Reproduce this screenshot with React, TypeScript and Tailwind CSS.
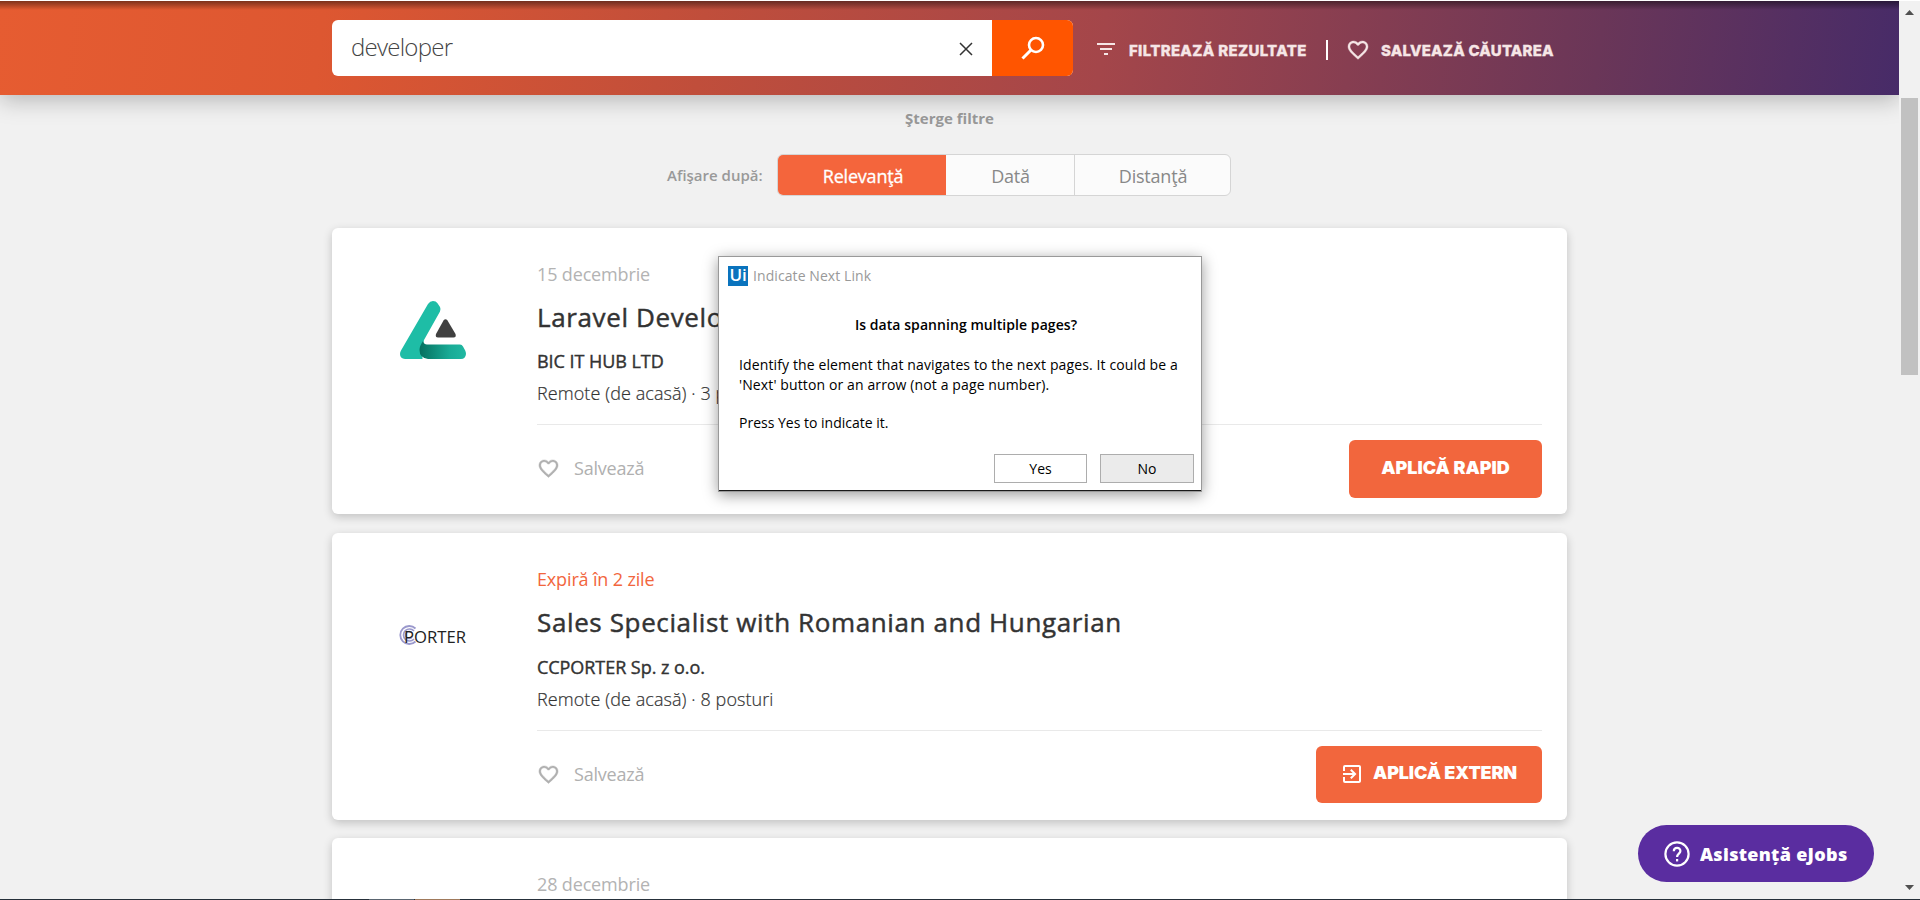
import type { ReactNode } from "react";

type IconProps = { className?: string };

const Heart = ({ className }: IconProps) => (
  <svg viewBox="0 0 24 24" className={className} fill="currentColor" stroke="currentColor" strokeWidth="0.4">
    <path d="M16.5 3c-1.74 0-3.41.81-4.5 2.09C10.91 3.81 9.24 3 7.5 3 4.42 3 2 5.42 2 8.5c0 3.78 3.4 6.86 8.55 11.54L12 21.35l1.45-1.32C18.6 15.36 22 12.28 22 8.5 22 5.42 19.58 3 16.5 3zm-4.4 15.55l-.1.1-.1-.1C7.14 14.24 4 11.39 4 8.5 4 6.5 5.5 5 7.5 5c1.54 0 3.04.99 3.57 2.36h1.87C13.46 5.99 14.96 5 16.5 5c2 0 3.5 1.5 3.5 3.5 0 2.89-3.14 5.74-7.9 10.05z" />
  </svg>
);

const ExitIcon = ({ className }: IconProps) => (
  <svg viewBox="0 0 24 24" className={className} fill="currentColor">
    <path d="M10.09 15.59L11.5 17l5-5-5-5-1.41 1.41L12.67 11H3v2h9.67l-2.58 2.59zM19 3H5a2 2 0 0 0-2 2v4h2V5h14v14H5v-4H3v4a2 2 0 0 0 2 2h14c1.1 0 2-.9 2-2V5c0-1.1-.9-2-2-2z" />
  </svg>
);

const LaravelLogo = () => (
  <svg viewBox="0 0 66 58" className="h-[58px] w-[66px]">
    <defs>
      <linearGradient id="foot" x1="0" x2="1" y1="0" y2="0">
        <stop offset="0" stopColor="#05705f" />
        <stop offset="0.65" stopColor="#19ab96" />
        <stop offset="1" stopColor="#20b8a2" />
      </linearGradient>
    </defs>
    <path d="M28 3Q30 0 33 0Q36 0 37.500 2.300L40 6Q41 8 40 10.500L24 39Q22 45 22.500 58H5Q0 57.500 0 53Q0 51 1 49.500Z" fill="#1ebda6" />
    <path d="M23 40Q24 43.500 27 43.500H60Q62 43.500 63 45.500L65.200 49.500Q66 51 66 53Q65.500 58 61 58H28Q19.500 57 19.500 49Q19.500 45 23 40Z" fill="url(#foot)" />
    <path d="M43.500 19.500Q45.500 17 47.500 19.500L55.500 33Q56.500 36.500 53.500 36.500H38Q35 36.500 36 33Z" fill="#404040" />
  </svg>
);

const PorterLogo = () => (
  <div className="relative flex h-[22px] w-[68px] items-center pl-[5px]">
    <svg viewBox="0 0 20 20" className="absolute left-0 top-0 size-5" fill="none" stroke="#9a98cc">
      <path d="M16.500 3.500A9 9 0 1 0 16.500 16.500" strokeWidth="1.800" />
      <path d="M15 6A6 6 0 1 0 15 14" strokeWidth="1.700" />
      <path d="M13 8A3.500 3.500 0 1 0 13 12" strokeWidth="1.700" />
    </svg>
    <span className="relative pt-px text-[16.7px] leading-[22px] text-[#222]">PORTER</span>
  </div>
);

type JobProps = {
  date: string;
  urgent?: boolean;
  title?: string;
  company?: string;
  place?: string;
  logo?: ReactNode;
  extra?: boolean;
  action?: ReactNode;
};

const Job = ({ date, urgent, title, company, place, logo, extra, action }: JobProps) => (
  <article
    className={`flex w-[1235px] shrink-0 rounded-md bg-white pr-[25px] shadow-[0_3px_10px_rgba(0,0,0,0.2)] ${extra ? "h-[287px]" : "h-[286px]"}`}
  >
    <div className="flex w-[205px] shrink-0 justify-center pr-[3px]">{logo}</div>
    <div className="flex grow flex-col pt-[34px]">
      <p className={`text-[18px] leading-6 tracking-[-0.15px] ${urgent ? "text-[#f2663d]" : "text-[#b3b3b3]"}`}>{date}</p>
      {title && (
        <>
          <h2 className="mt-[13px] text-[26px] leading-9 tracking-[0.62px] text-[#333] [-webkit-text-stroke:0.45px_#333]">{title}</h2>
          <p className={`text-[18px] leading-6 tracking-[-0.05px] text-[#333] [-webkit-text-stroke:0.4px_#333] ${extra ? "mt-[15px]" : "mt-[14px]"}`}>{company}</p>
          <p className="mt-2 text-[18px] font-light leading-6 tracking-[0.08px] text-[#333] [-webkit-text-stroke:0.2px_#333]">{place}</p>
          <div className="mt-[19px] flex items-start justify-between border-t border-[#e9e9e9] pt-[15px]">
            <div className="flex h-[56px] items-center text-[#b0b0b0]">
              <Heart className="h-[23px] w-[23px]" />
              <span className="ml-[14px] text-[18px] leading-6 tracking-[-0.2px]">Salvează</span>
            </div>
            {action}
          </div>
        </>
      )}
    </div>
  </article>
);

const Scrollbar = () => (
  <div className="flex w-[21px] shrink-0 flex-col items-center bg-[#f1f1f1] pb-[9px] pt-[9px]">
    <svg viewBox="0 0 9 5" className="h-[5px] w-[9px]"><path d="M4.500 0 9 5H0Z" fill="#505050" /></svg>
    <div className="mt-[83px] h-[277px] w-[17px] bg-[#c1c1c1]" />
    <svg viewBox="0 0 9 5" className="mt-auto h-[5px] w-[9px]"><path d="M0 0H9L4.500 5Z" fill="#505050" /></svg>
  </div>
);

const Header = () => (
  <header className="relative z-10 flex h-[94px] shrink-0 items-start bg-[linear-gradient(97deg,#e65c31_0%,#dd5731_17%,#c04e3b_37%,#a4464a_58%,#6a3658_84%,#472b68_100%)] pl-[332px] pt-[19px] shadow-[0_5px_22px_rgba(0,0,0,0.25)]">
    <div className="flex h-14 w-[741px] overflow-hidden rounded-md bg-white">
      <span className="grow pl-[19px] text-[24px] font-light leading-[54px] tracking-[-0.75px] text-[#444]">developer</span>
      <svg viewBox="0 0 14 14" className="mr-[19px] mt-[22px] h-[14px] w-[14px]" fill="none" stroke="#333" strokeWidth="1.500">
        <path d="M1 1 13 13M13 1 1 13" />
      </svg>
      <div className="flex w-[81px] items-center justify-center bg-[#ff5500]">
        <svg viewBox="0 0 24 24" className="h-6 w-6" fill="none" stroke="#fff" strokeWidth="2.600">
          <circle cx="15" cy="9" r="7" />
          <path d="M10 14 1.500 22.500" strokeWidth="3" />
        </svg>
      </div>
    </div>
    <div className="ml-6 mt-5 flex h-5 items-center text-[#f6e6e6]">
      <svg viewBox="0 0 18 12" className="mb-[2px] h-3 w-[18px]" fill="currentColor">
        <path d="M0 0H18V2H0ZM3 5H15V7H3ZM7 10H11V12H7Z" />
      </svg>
      <span className="ml-[14px] mt-px w-[183px] whitespace-nowrap font-['Inter'] text-[15px] font-extrabold leading-5 tracking-[0.32px] [-webkit-text-stroke:0.3px_#f6e6e6]">FILTREAZĂ REZULTATE</span>
      <span className="ml-[14px] h-5 w-[2px] bg-white" />
      <Heart className="ml-[18px] h-6 w-6" />
      <span className="ml-[11px] mt-px whitespace-nowrap font-['Inter'] text-[15px] font-extrabold leading-5 tracking-[0.2px] [-webkit-text-stroke:0.3px_#f6e6e6]">SALVEAZĂ CĂUTAREA</span>
    </div>
    <div className="absolute inset-x-0 top-0 h-[9px] bg-gradient-to-b from-black/45 to-transparent" />
  </header>
);

const Dialog = () => (
  <section className="absolute left-[718px] top-[256px] z-20 flex h-[236px] w-[484px] flex-col border border-[#999] bg-white text-[14px] leading-5 text-black shadow-[0_3px_14px_rgba(0,0,0,0.4)]">
    <div className="flex h-[37px] items-center pl-[9px]">
      <span className="flex h-5 w-5 items-center justify-center bg-[#0a73bd] pb-px text-[17px] font-semibold tracking-[-0.3px] text-white">Ui</span>
      <span className="ml-[5px] tracking-[0.08px] text-[#999]">Indicate Next Link</span>
    </div>
    <h3 className="mt-[21px] pl-[12px] text-center font-semibold tracking-[0.06px]">Is data spanning multiple pages?</h3>
    <p className="mt-5 whitespace-nowrap pl-5 tracking-[0.12px]">
      Identify the element that navigates to the next pages. It could be a
      <br />
      'Next' button or an arrow (not a page number).
    </p>
    <p className="mt-[18px] pl-5">Press Yes to indicate it.</p>
    <div className="mt-auto flex justify-end gap-[13px] pb-[7px] pr-[7px]">
      <button className="h-[29px] w-[93px] border border-[#adadad] bg-white">Yes</button>
      <button className="h-[29px] w-[94px] border border-[#adadad] bg-[#ebebeb]">No</button>
    </div>
    <div className="h-px shrink-0 bg-[#1a1a1a]" />
  </section>
);

export default function App() {
  return (
    <div className="relative flex h-[900px] w-[1920px] flex-col overflow-hidden bg-[#f1f1f1] font-['Open_Sans',sans-serif]">
      <div className="h-px shrink-0 bg-white" />
      <div className="flex h-[898px] shrink-0">
        <div className="flex w-[1899px] shrink-0 flex-col overflow-hidden">
          <Header />
          <main className="flex grow flex-col items-center pt-[13px]">
            <span className="text-[15px] font-bold leading-5 text-[#999]">Şterge filtre</span>
            <div className="mt-[26px] flex h-[42px] w-[1235px] items-center pl-[335px]">
              <span className="w-[110px] whitespace-nowrap text-[15px] font-semibold leading-5 text-[#999]">Afişare după:</span>
              <div className="flex h-[42px] w-[454px] overflow-hidden rounded-md border border-[#d5d5d5] bg-[#fbfbfb] text-center text-[18px] leading-[42px] tracking-[-0.2px] text-[#888]">
                <span className="w-[168px] bg-[#f4653c] pl-[2px] text-white [-webkit-text-stroke:0.3px_#fff]">Relevanţă</span>
                <span className="w-[129px] border-r border-[#d5d5d5] pl-px">Dată</span>
                <span className="grow pl-px">Distanţă</span>
              </div>
            </div>
            <div className="mt-8 flex flex-col">
              <Job
                date="15 decembrie"
                title="Laravel Developer"
                company="BIC IT HUB LTD"
                place="Remote (de acasă) · 3 posturi"
                logo={<div className="pt-[73px]"><LaravelLogo /></div>}
                action={
                  <button className="h-[58px] w-[193px] rounded-md bg-[#f2663d] pb-1 font-['Inter'] text-[18px] font-black text-white">APLICĂ RAPID</button>
                }
              />
              <div className="h-[19px]" />
              <Job
                extra
                urgent
                date="Expiră în 2 zile"
                title="Sales Specialist with Romanian and Hungarian"
                company="CCPORTER Sp. z o.o."
                place="Remote (de acasă) · 8 posturi"
                logo={<div className="pt-[92px]"><PorterLogo /></div>}
                action={
                  <button className="flex h-[57px] w-[226px] items-center rounded-md bg-[#f2663d] pl-[24px] text-white">
                    <ExitIcon className="mb-[2px] h-6 w-6" />
                    <span className="ml-[9px] pb-1 font-['Inter'] text-[18px] font-black tracking-[-0.15px]">APLICĂ EXTERN</span>
                  </button>
                }
              />
              <div className="h-[18px]" />
              <Job date="28 decembrie" />
            </div>
          </main>
        </div>
        <Scrollbar />
      </div>
      <div className="flex h-px shrink-0 bg-[#26303a] pl-[369px]">
        <span className="w-[45px] bg-[#5a6570]" />
        <span className="ml-px w-[45px] bg-[#a07a5c]" />
      </div>
      <Dialog />
      <button className="absolute left-[1638px] top-[825px] z-20 flex h-[57px] w-[236px] items-center rounded-full bg-[#5a2da0] pl-[26px] text-white">
        <svg viewBox="0 0 26 26" className="h-[26px] w-[26px]" fill="none" stroke="#fff" strokeWidth="2.200">
          <circle cx="13" cy="13" r="11.600" />
          <path d="M9.800 10.200C9.800 5.800 16.400 5.800 16.400 10C16.400 12.600 13.100 12.800 13.100 16" />
          <path d="M13.100 18V20.400" />
        </svg>
        <span className="ml-[10px] pt-[2px] text-[18px] font-extrabold tracking-[0.3px]">Asistență eJobs</span>
      </button>
    </div>
  );
}
